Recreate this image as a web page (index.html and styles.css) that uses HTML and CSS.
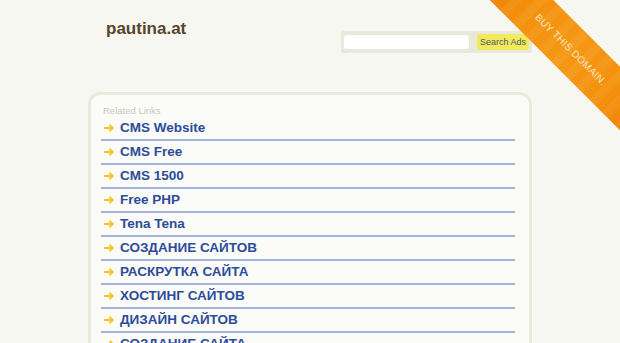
FILE: index.html
```html
<!DOCTYPE html>
<html lang="ru">
<head>
    <meta charset="UTF-8">
    <meta name="viewport" content="width=device-width, initial-scale=1.0">
    <title>pautina.at</title>
    <link rel="stylesheet" href="styles.css">
</head>
<body>
    <a class="ribbon" href="#"><span>BUY THIS DOMAIN.</span></a>

    <div class="page">
        <div class="header">
            <div class="logo">pautina.at</div>
            <form class="search">
                <input class="search-input" type="text">
                <button class="search-button" type="button">Search Ads</button>
            </form>
        </div>

        <div class="links-box">
            <div class="links-title">Related Links</div>
            <ul class="links">
                <li><svg class="arrow" viewBox="0 0 10 8"><path d="M0 4H8.5M5.5 1L8.8 4L5.5 7"></path></svg><a href="#">CMS Website</a></li>
                <li><svg class="arrow" viewBox="0 0 10 8"><path d="M0 4H8.5M5.5 1L8.8 4L5.5 7"></path></svg><a href="#">CMS Free</a></li>
                <li><svg class="arrow" viewBox="0 0 10 8"><path d="M0 4H8.5M5.5 1L8.8 4L5.5 7"></path></svg><a href="#">CMS 1500</a></li>
                <li><svg class="arrow" viewBox="0 0 10 8"><path d="M0 4H8.5M5.5 1L8.8 4L5.5 7"></path></svg><a href="#">Free PHP</a></li>
                <li><svg class="arrow" viewBox="0 0 10 8"><path d="M0 4H8.5M5.5 1L8.8 4L5.5 7"></path></svg><a href="#">Tena Tena</a></li>
                <li><svg class="arrow" viewBox="0 0 10 8"><path d="M0 4H8.5M5.5 1L8.8 4L5.5 7"></path></svg><a href="#">СОЗДАНИЕ САЙТОВ</a></li>
                <li><svg class="arrow" viewBox="0 0 10 8"><path d="M0 4H8.5M5.5 1L8.8 4L5.5 7"></path></svg><a href="#">РАСКРУТКА САЙТА</a></li>
                <li><svg class="arrow" viewBox="0 0 10 8"><path d="M0 4H8.5M5.5 1L8.8 4L5.5 7"></path></svg><a href="#">ХОСТИНГ САЙТОВ</a></li>
                <li><svg class="arrow" viewBox="0 0 10 8"><path d="M0 4H8.5M5.5 1L8.8 4L5.5 7"></path></svg><a href="#">ДИЗАЙН САЙТОВ</a></li>
                <li><svg class="arrow" viewBox="0 0 10 8"><path d="M0 4H8.5M5.5 1L8.8 4L5.5 7"></path></svg><a href="#">СОЗДАНИЕ САЙТА</a></li>
            </ul>
        </div>
    </div>
</body>
</html>
```

FILE: styles.css
```css
* {
    box-sizing: border-box;
    margin: 0;
    padding: 0;
}

html, body {
    overflow: hidden;
}

body {
    font-family: "Liberation Sans", Arial, sans-serif;
    background-color: #f7f7f1;
    min-height: 100vh;
}

.page {
    width: 444px;
    margin: 0 auto;
}

/* header */
.header {
    height: 92px;
    padding-top: 19px;
    display: flex;
    align-items: flex-start;
    justify-content: space-between;
}

.logo {
    margin-left: 18px;
    font-size: 17px;
    line-height: 20px;
    font-weight: bold;
    color: #58452c;
}

.search {
    margin-top: 12px;
    width: 191px;
    height: 22px;
    padding: 4px 3px 0 3px;
    background-color: #e7e9da;
    border-radius: 3px;
    display: flex;
    align-items: flex-start;
    gap: 8px;
}

.search-input {
    width: 125px;
    height: 14px;
    border: none;
    border-radius: 3px;
    background: white;
    outline: none;
}

.search-button {
    margin-top: -1px;
    width: 52px;
    height: 16px;
    border: none;
    border-radius: 2px;
    background-color: #f2ea5c;
    color: #4d5867;
    font-family: "Liberation Sans", Arial, sans-serif;
    font-size: 9px;
    cursor: pointer;
}

/* related links */
.links-box {
    background-color: #fbfbf7;
    border: 3px solid #e8eadc;
    border-radius: 12px;
    padding: 10px 14px 20px 10px;
    min-height: 300px;
}

.links-title {
    font-size: 9.5px;
    line-height: 12px;
    color: #c9c9c1;
    padding-left: 2px;
}

.links {
    list-style: none;
}

.links li {
    height: 24px;
    border-bottom: 2px solid #a6b4dc;
    display: flex;
    align-items: center;
    padding-left: 3px;
    padding-bottom: 1px;
}

.arrow {
    width: 10px;
    height: 8px;
    margin-right: 6px;
    fill: none;
    stroke: #f3c224;
    stroke-width: 1.8;
}

.links a {
    font-size: 13.5px;
    font-weight: bold;
    color: #2d4b9b;
    text-decoration: none;
}

/* corner ribbon */
.ribbon {
    position: absolute;
    left: 421px;
    top: 27px;
    width: 300px;
    height: 45px;
    transform: rotate(45deg);
    display: flex;
    align-items: center;
    justify-content: center;
    text-decoration: none;
    background:
        repeating-linear-gradient(90deg, rgba(255,255,255,0.05) 0 9px, rgba(0,0,0,0) 9px 18px),
        linear-gradient(90deg, #ee7000 0%, #f3900c 30%, #f59814 50%, #f3900c 70%, #ee7000 100%);
}

.ribbon span {
    font-size: 10px;
    letter-spacing: 0.3px;
    color: rgba(255, 240, 215, 0.92);
}
```
